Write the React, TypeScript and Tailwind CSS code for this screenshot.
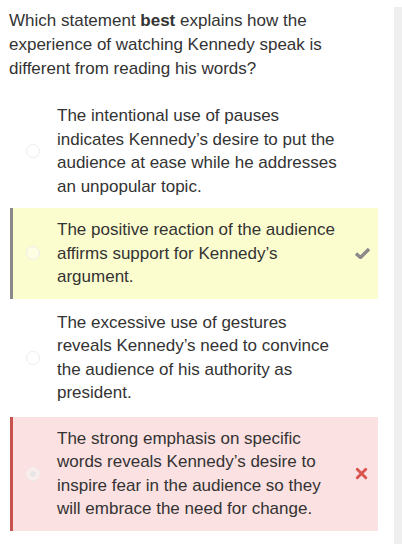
import { X } from "lucide-react";

type Option = {
  text: string;
  state?: "correct" | "wrong";
  selected?: boolean;
};

const options: Option[] = [
  {
    text: "The intentional use of pauses indicates Kennedy\u2019s desire to put the audience at ease while he addresses an unpopular topic.",
  },
  {
    text: "The positive reaction of the audience affirms support for Kennedy\u2019s argument.",
    state: "correct",
  },
  {
    text: "The excessive use of gestures reveals Kennedy\u2019s need to convince the audience of his authority as president.",
  },
  {
    text: "The strong emphasis on specific words reveals Kennedy\u2019s desire to inspire fear in the audience so they will embrace the need for change.",
    state: "wrong",
    selected: true,
  },
];

function Radio({ selected }: { selected?: boolean }) {
  return (
    <span className="flex h-[14px] w-[14px] shrink-0 items-center justify-center rounded-full border border-[#eeeeee] bg-white/40">
      {selected && <span className="h-[6px] w-[6px] rounded-full bg-[#e6e6e6]" />}
    </span>
  );
}

// chunky check like the one in the quiz widget
function CheckMark() {
  return (
    <svg width="15" height="12" viewBox="0 0 15 12" className="text-[#8a8a8a]">
      <path d="M1 6.5 L5.5 10.5 L14 2" fill="none" stroke="currentColor" strokeWidth="3.4" strokeLinejoin="round" />
    </svg>
  );
}

function OptionRow({ option, first }: { option: Option; first?: boolean }) {
  const box =
    option.state === "correct"
      ? "bg-[#fcfdcf] border-[#898989]"
      : option.state === "wrong"
        ? "bg-[#fbe1e1] border-[#c9524f]"
        : "bg-white border-transparent";

  return (
    <div className={`flex items-center border-l-[3px] pr-2 ${first ? "pt-[12px] pb-[8px]" : "py-[10px]"} ${box}`}>
      <div className="flex w-[44px] shrink-0 justify-center pr-[4px]">
        <Radio selected={option.selected} />
      </div>
      <p className="w-[282px] text-[17px] leading-[23.5px] text-[#333333]">{option.text}</p>
      <div className="flex flex-1 justify-center pl-[16px]">
        {option.state === "correct" && <CheckMark />}
        {option.state === "wrong" && <X size={17} strokeWidth={4} className="text-[#d9534f]" />}
      </div>
    </div>
  );
}

export default function App() {
  return (
    <div className="flex h-[544px] w-[402px] bg-white font-['Liberation_Sans',Arial,sans-serif]">
      <div className="w-[378px]">
        <p className="px-[9px] pt-[9px] text-[17px] leading-[24px] text-[#333333]">
          Which statement <b>best</b> explains how the experience of watching Kennedy speak is different from reading his words?
        </p>
        <div className="mt-[11px] flex flex-col gap-[2px] pl-[10px]">
          {options.map((o, i) => (
            <OptionRow key={i} option={o} first={i === 0} />
          ))}
        </div>
      </div>
      <div className="ml-[16px] mt-[7px] w-[8px] bg-[#efefef]" />
    </div>
  );
}
